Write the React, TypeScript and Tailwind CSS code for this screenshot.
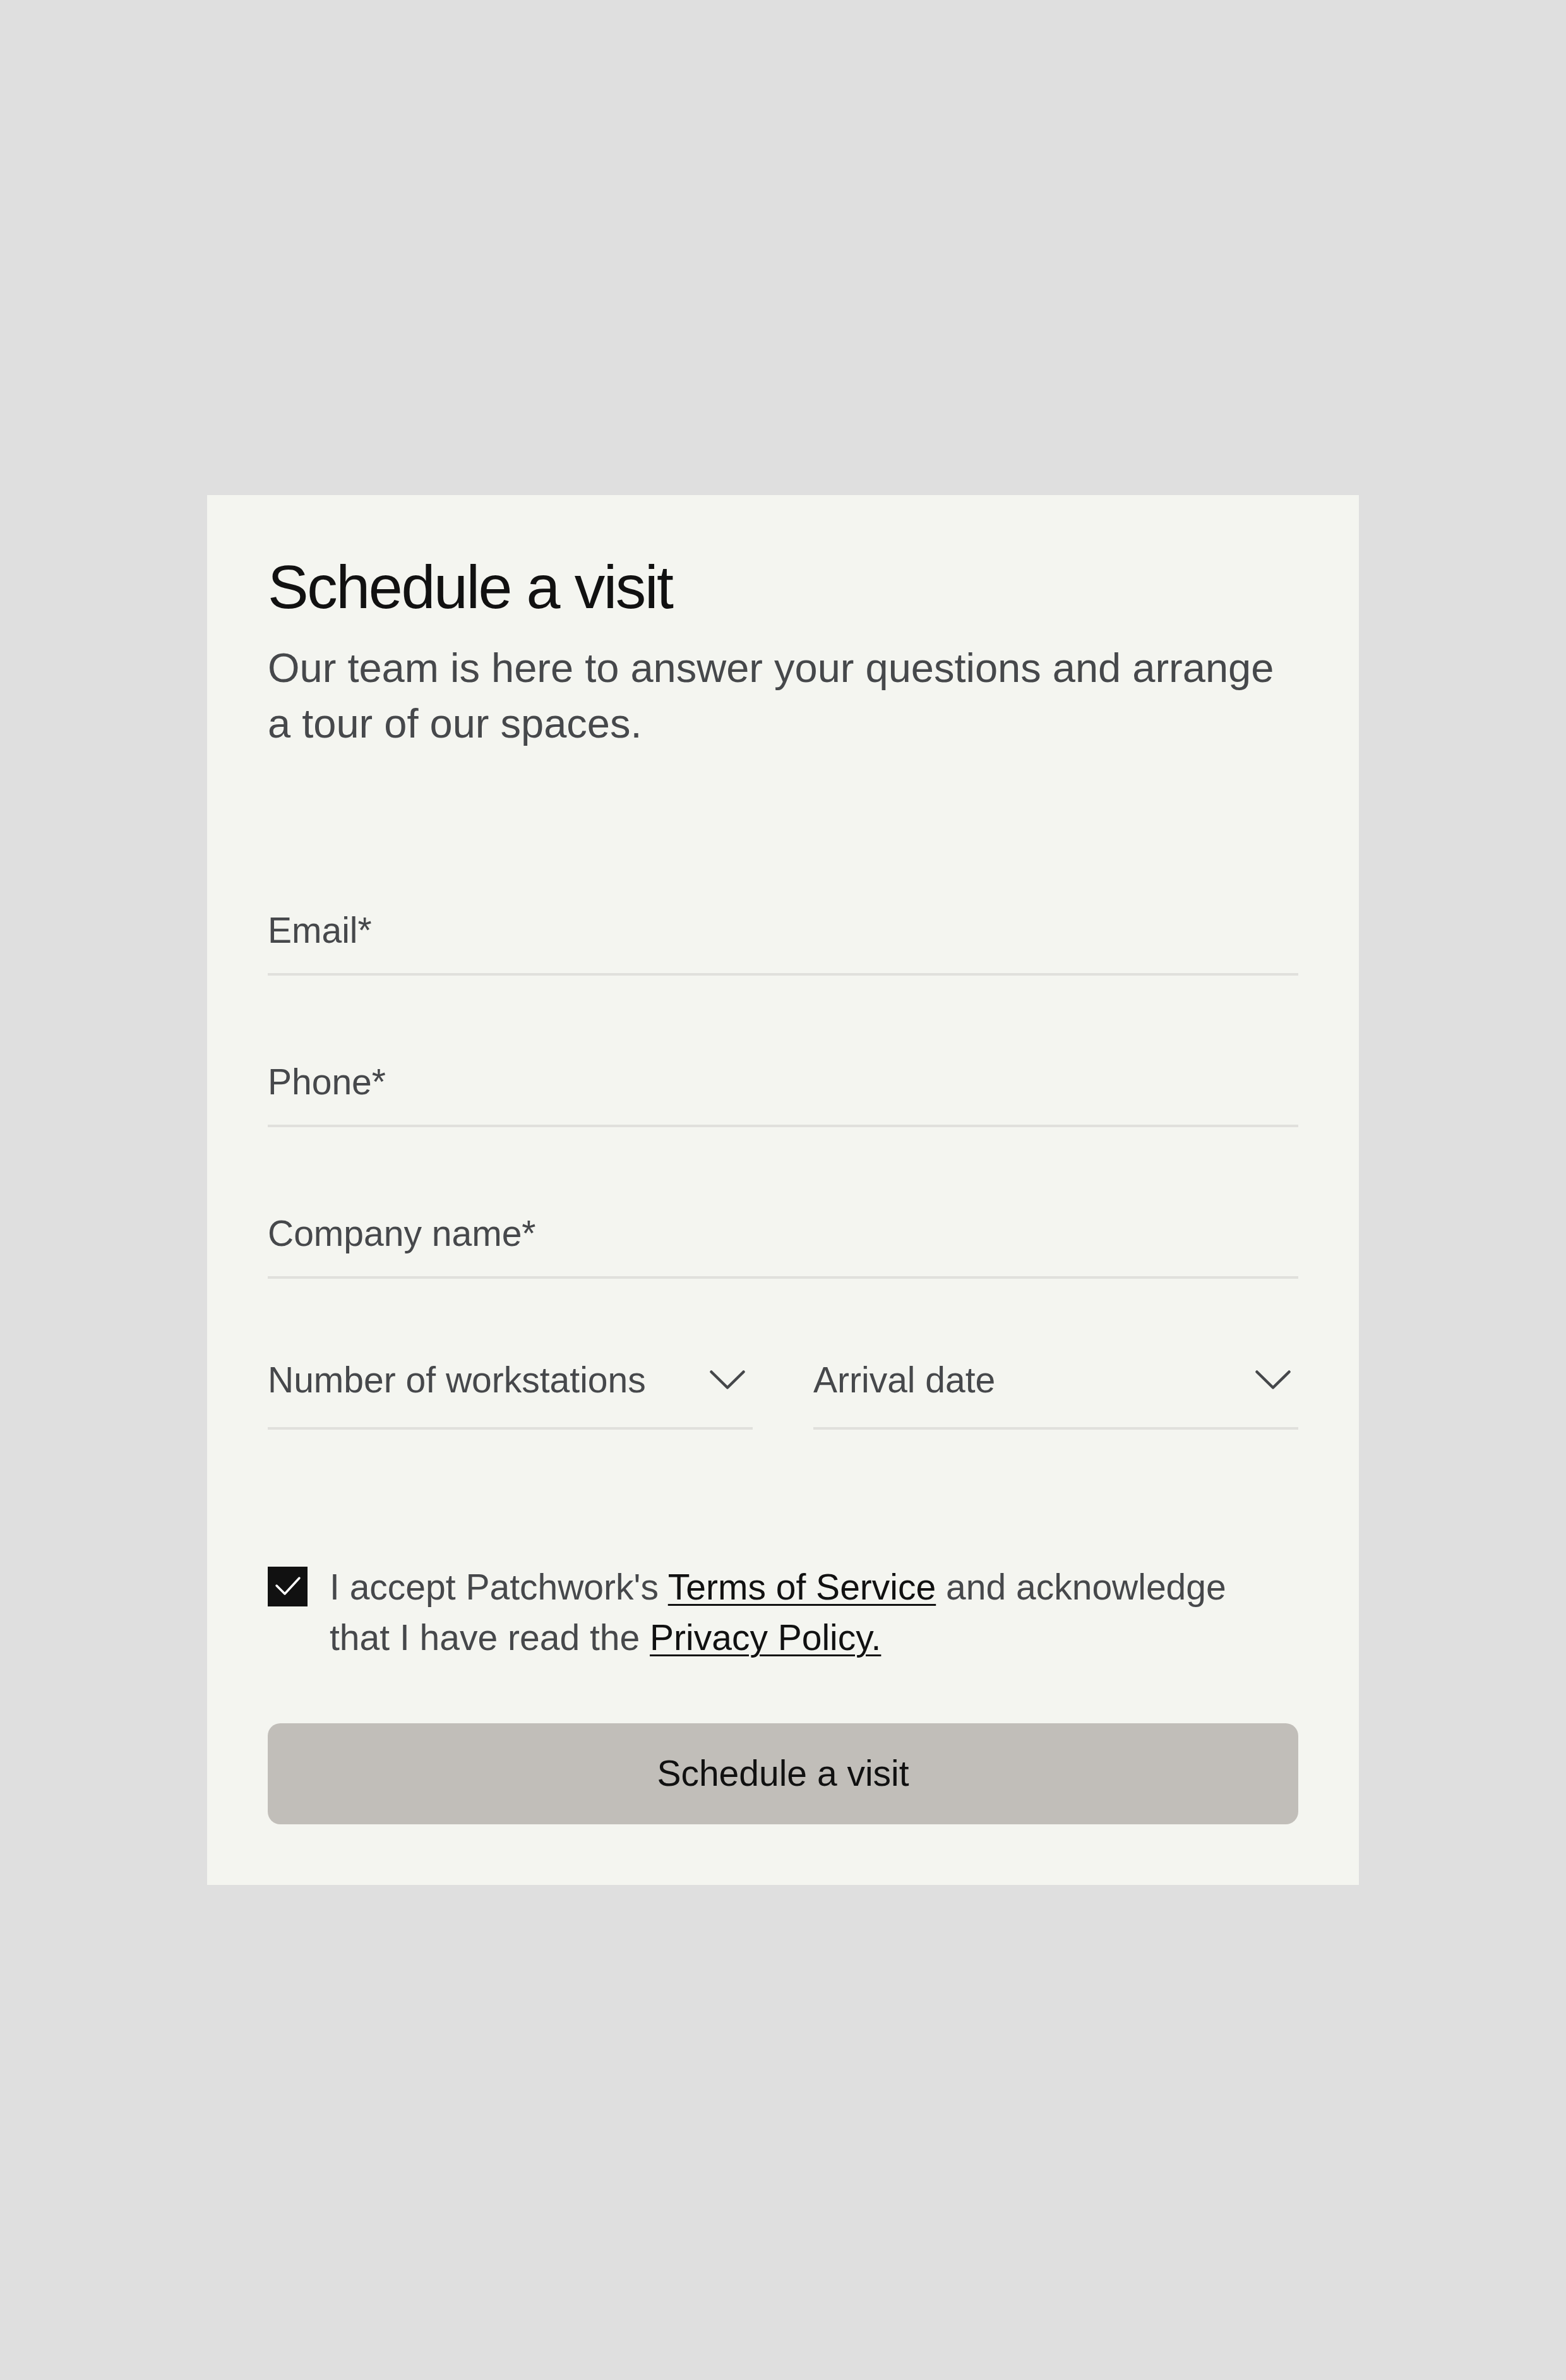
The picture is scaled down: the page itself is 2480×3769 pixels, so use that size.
import { useState } from "react";

function Chevron() {
    return (
        <svg width="56" height="30" viewBox="0 0 56 30" fill="none" className="mr-[12px] shrink-0">
            <path d="M2.5 2.5 L28 27.5 L53.5 2.5" stroke="#45474a" strokeWidth="4.5" strokeLinecap="round" strokeLinejoin="round" />
        </svg>
    );
}

function TextField({ placeholder }: { placeholder: string }) {
    const [value, setValue] = useState("");
    return (
        <div className="border-b-[4px] border-[#e0e0dc] pb-[28px]">
            <input
                type="text"
                value={value}
                onChange={(e) => setValue(e.target.value)}
                placeholder={placeholder}
                className="w-full h-[80px] bg-transparent outline-none text-[57px] leading-[80px] text-[#111] placeholder:text-[#46484b]"
            />
        </div>
    );
}

function SelectField({ label }: { label: string }) {
    return (
        <button type="button" className="flex items-center justify-between w-full border-b-[4px] border-[#e0e0dc] pb-[35px] text-left">
            <span className="text-[57px] leading-[80px] text-[#46484b]">{label}</span>
            <Chevron />
        </button>
    );
}

function App() {
    const [accepted, setAccepted] = useState(true);

    return (
        <div className="min-h-screen bg-[#dfdfdf] flex items-center justify-center font-['Liberation_Sans',Arial,sans-serif]">
            <div className="w-[1824px] bg-[#f4f5f0] px-[96px] pt-[88px] pb-[96px]">
                <h1 className="text-[97px] leading-[115px] tracking-[-0.025em] text-[#111]">Schedule a visit</h1>
                <p className="mt-[27px] text-[65px] leading-[88px] text-[#46484b]">
                    Our team is here to answer your questions and arrange a tour of our spaces.
                </p>

                <div className="mt-[243px] flex flex-col gap-[128px]">
                    <TextField placeholder="Email*" />
                    <TextField placeholder="Phone*" />
                    <TextField placeholder="Company name*" />
                </div>

                <div className="mt-[120px] grid grid-cols-2 gap-x-[96px]">
                    <SelectField label="Number of workstations" />
                    <SelectField label="Arrival date" />
                </div>

                <div className="mt-[209px] flex items-start gap-[35px]">
                    <button
                        type="button"
                        onClick={() => setAccepted(!accepted)}
                        className={"mt-[8px] w-[63px] h-[63px] shrink-0 flex items-center justify-center " + (accepted ? "bg-[#111]" : "border-[3px] border-[#111]")}
                    >
                        {accepted ? (
                            <svg width="63" height="63" viewBox="0 0 63 63" fill="none">
                                <path d="M14 30 L27 43 L50 18" stroke="#fff" strokeWidth="3.5" strokeLinecap="round" strokeLinejoin="round" />
                            </svg>
                        ) : null}
                    </button>
                    <p className="max-w-[1490px] text-[57px] leading-[80px] text-[#46484b]">
                        I accept Patchwork's{" "}
                        <a href="#" className="text-[#111] underline decoration-[3px] underline-offset-[7px]">Terms of Service</a>{" "}
                        and acknowledge that I have read the{" "}
                        <a href="#" className="text-[#111] underline decoration-[3px] underline-offset-[7px]">Privacy Policy.</a>
                    </p>
                </div>

                <button type="button" className="mt-[96px] w-full h-[160px] rounded-[20px] bg-[#c1beb9] text-[57px] text-[#111]">
                    Schedule a visit
                </button>
            </div>
        </div>
    );
}

export default App;
